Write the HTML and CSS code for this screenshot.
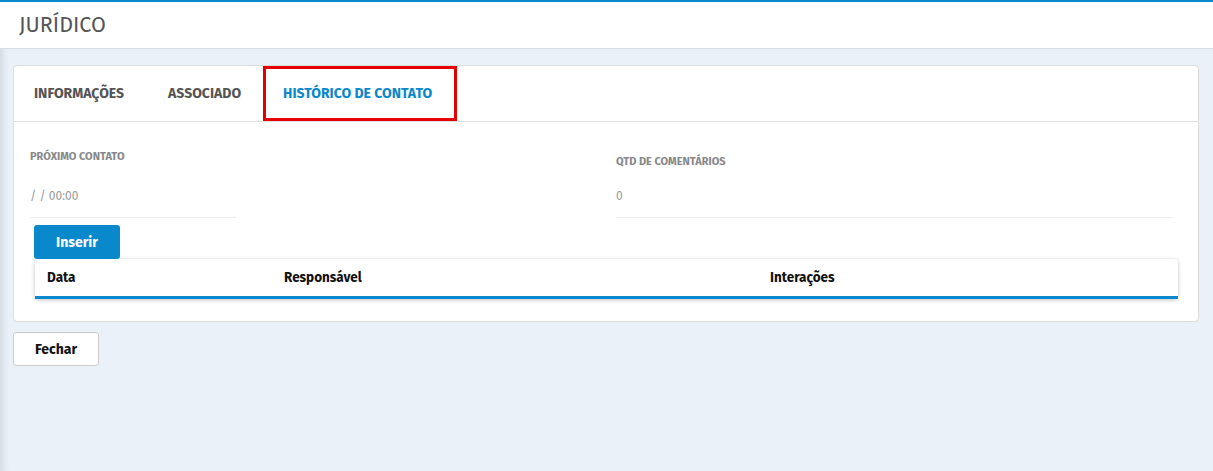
FILE: index.html
```html
<!DOCTYPE html>
<html lang="pt-BR">

<head>
  <meta charset="UTF-8">
  <meta name="viewport" content="width=device-width, initial-scale=1.0">
  <title>Jurídico</title>
  <link rel="stylesheet" href="styles.css">
</head>

<body>
  <header class="page-header">
    <h1>JURÍDICO</h1>
  </header>

  <main class="content">
    <div class="card">
      <nav class="tabs">
        <a class="tab">INFORMAÇÕES</a>
        <a class="tab">ASSOCIADO</a>
        <a class="tab active">HISTÓRICO DE CONTATO</a>
      </nav>

      <div class="card-body">
        <div class="fields">
          <div class="field">
            <label>PRÓXIMO CONTATO</label>
            <div class="field-value">/ / 00:00</div>
          </div>
          <div class="field field-wide">
            <label>QTD DE COMENTÁRIOS</label>
            <div class="field-value">0</div>
          </div>
        </div>

        <button class="btn btn-primary">Inserir</button>

        <table class="grid">
          <thead>
            <tr>
              <th class="col-data">Data</th>
              <th class="col-resp">Responsável</th>
              <th>Interações</th>
            </tr>
          </thead>
        </table>
      </div>
    </div>

    <button class="btn btn-default">Fechar</button>
  </main>
</body>

</html>
```

FILE: styles.css
```css
body {
  margin: 0;
  font-family: "Fira Sans", "Noto Sans", Arial, sans-serif;
  background-color: #eaf1f8;
  border-top: 2px solid #0a88cc;
  min-height: 469px;
  box-shadow: inset 9px 0 7px -6px rgba(0, 0, 0, 0.1);
}

.page-header {
  background-color: white;
  height: 46px;
  border-bottom: 1px solid #d9dde1;
  display: flex;
  align-items: center;
  padding-left: 19px;
}

.page-header h1 {
  margin: 0;
  font-size: 21.5px;
  font-weight: normal;
  color: #555;
}

.content {
  padding: 16px 14px 0 13px;
}

.card {
  background-color: white;
  border: 1px solid #dcdcdc;
  border-radius: 4px;
}

.tabs {
  display: flex;
  height: 55px;
  border-bottom: 1px solid #e0e0e0;
  padding-left: 20px;
}

.tab {
  display: flex;
  align-items: center;
  font-size: 14px;
  font-weight: bold;
  color: #555;
  margin-right: 44px;
}

.tab.active {
  color: #0a88cc;
  margin-left: -22px;
  padding: 0 25px 0 20px;
  outline: 3px solid #e50000;
  outline-offset: -3px;
  box-shadow: inset 0 -3px 0 #0a88cc;
}

.card-body {
  padding: 28px 20px 22px 16px;
}

.fields {
  display: flex;
}

.field {
  width: 206px;
  border-bottom: 1px solid #eee;
  margin-right: 380px;
}

.field-wide {
  flex: 1;
  margin-right: 5px;
  padding-top: 5px;
}

.field label {
  display: block;
  font-size: 11px;
  font-weight: bold;
  color: #888;
}

.field-value {
  font-size: 12px;
  color: #999;
  padding: 26px 0 14px;
}

.field-wide .field-value {
  padding-top: 21px;
}

.btn {
  font-family: inherit;
  font-size: 14px;
  font-weight: bold;
  border-radius: 3px;
  cursor: pointer;
  width: 86px;
  height: 34px;
}

.btn-primary {
  margin: 7px 0 0 4px;
  background-color: #0a88cc;
  border: none;
  color: white;
}

.btn-default {
  margin-top: 10px;
  background-color: white;
  border: 1px solid #ccc;
  color: #111;
}

.grid {
  width: calc(100% - 5px);
  margin-left: 5px;
  border-collapse: collapse;
  border-radius: 4px;
  box-shadow: 0 1px 4px rgba(0, 0, 0, 0.25);
  border-bottom: 3px solid #0a88cc;
}

.grid th {
  text-align: left;
  font-size: 13.5px;
  font-weight: bold;
  color: #111;
  height: 37px;
  padding: 0 12px;
}

.col-data {
  width: 213px;
}

.col-resp {
  width: 462px;
}
```
